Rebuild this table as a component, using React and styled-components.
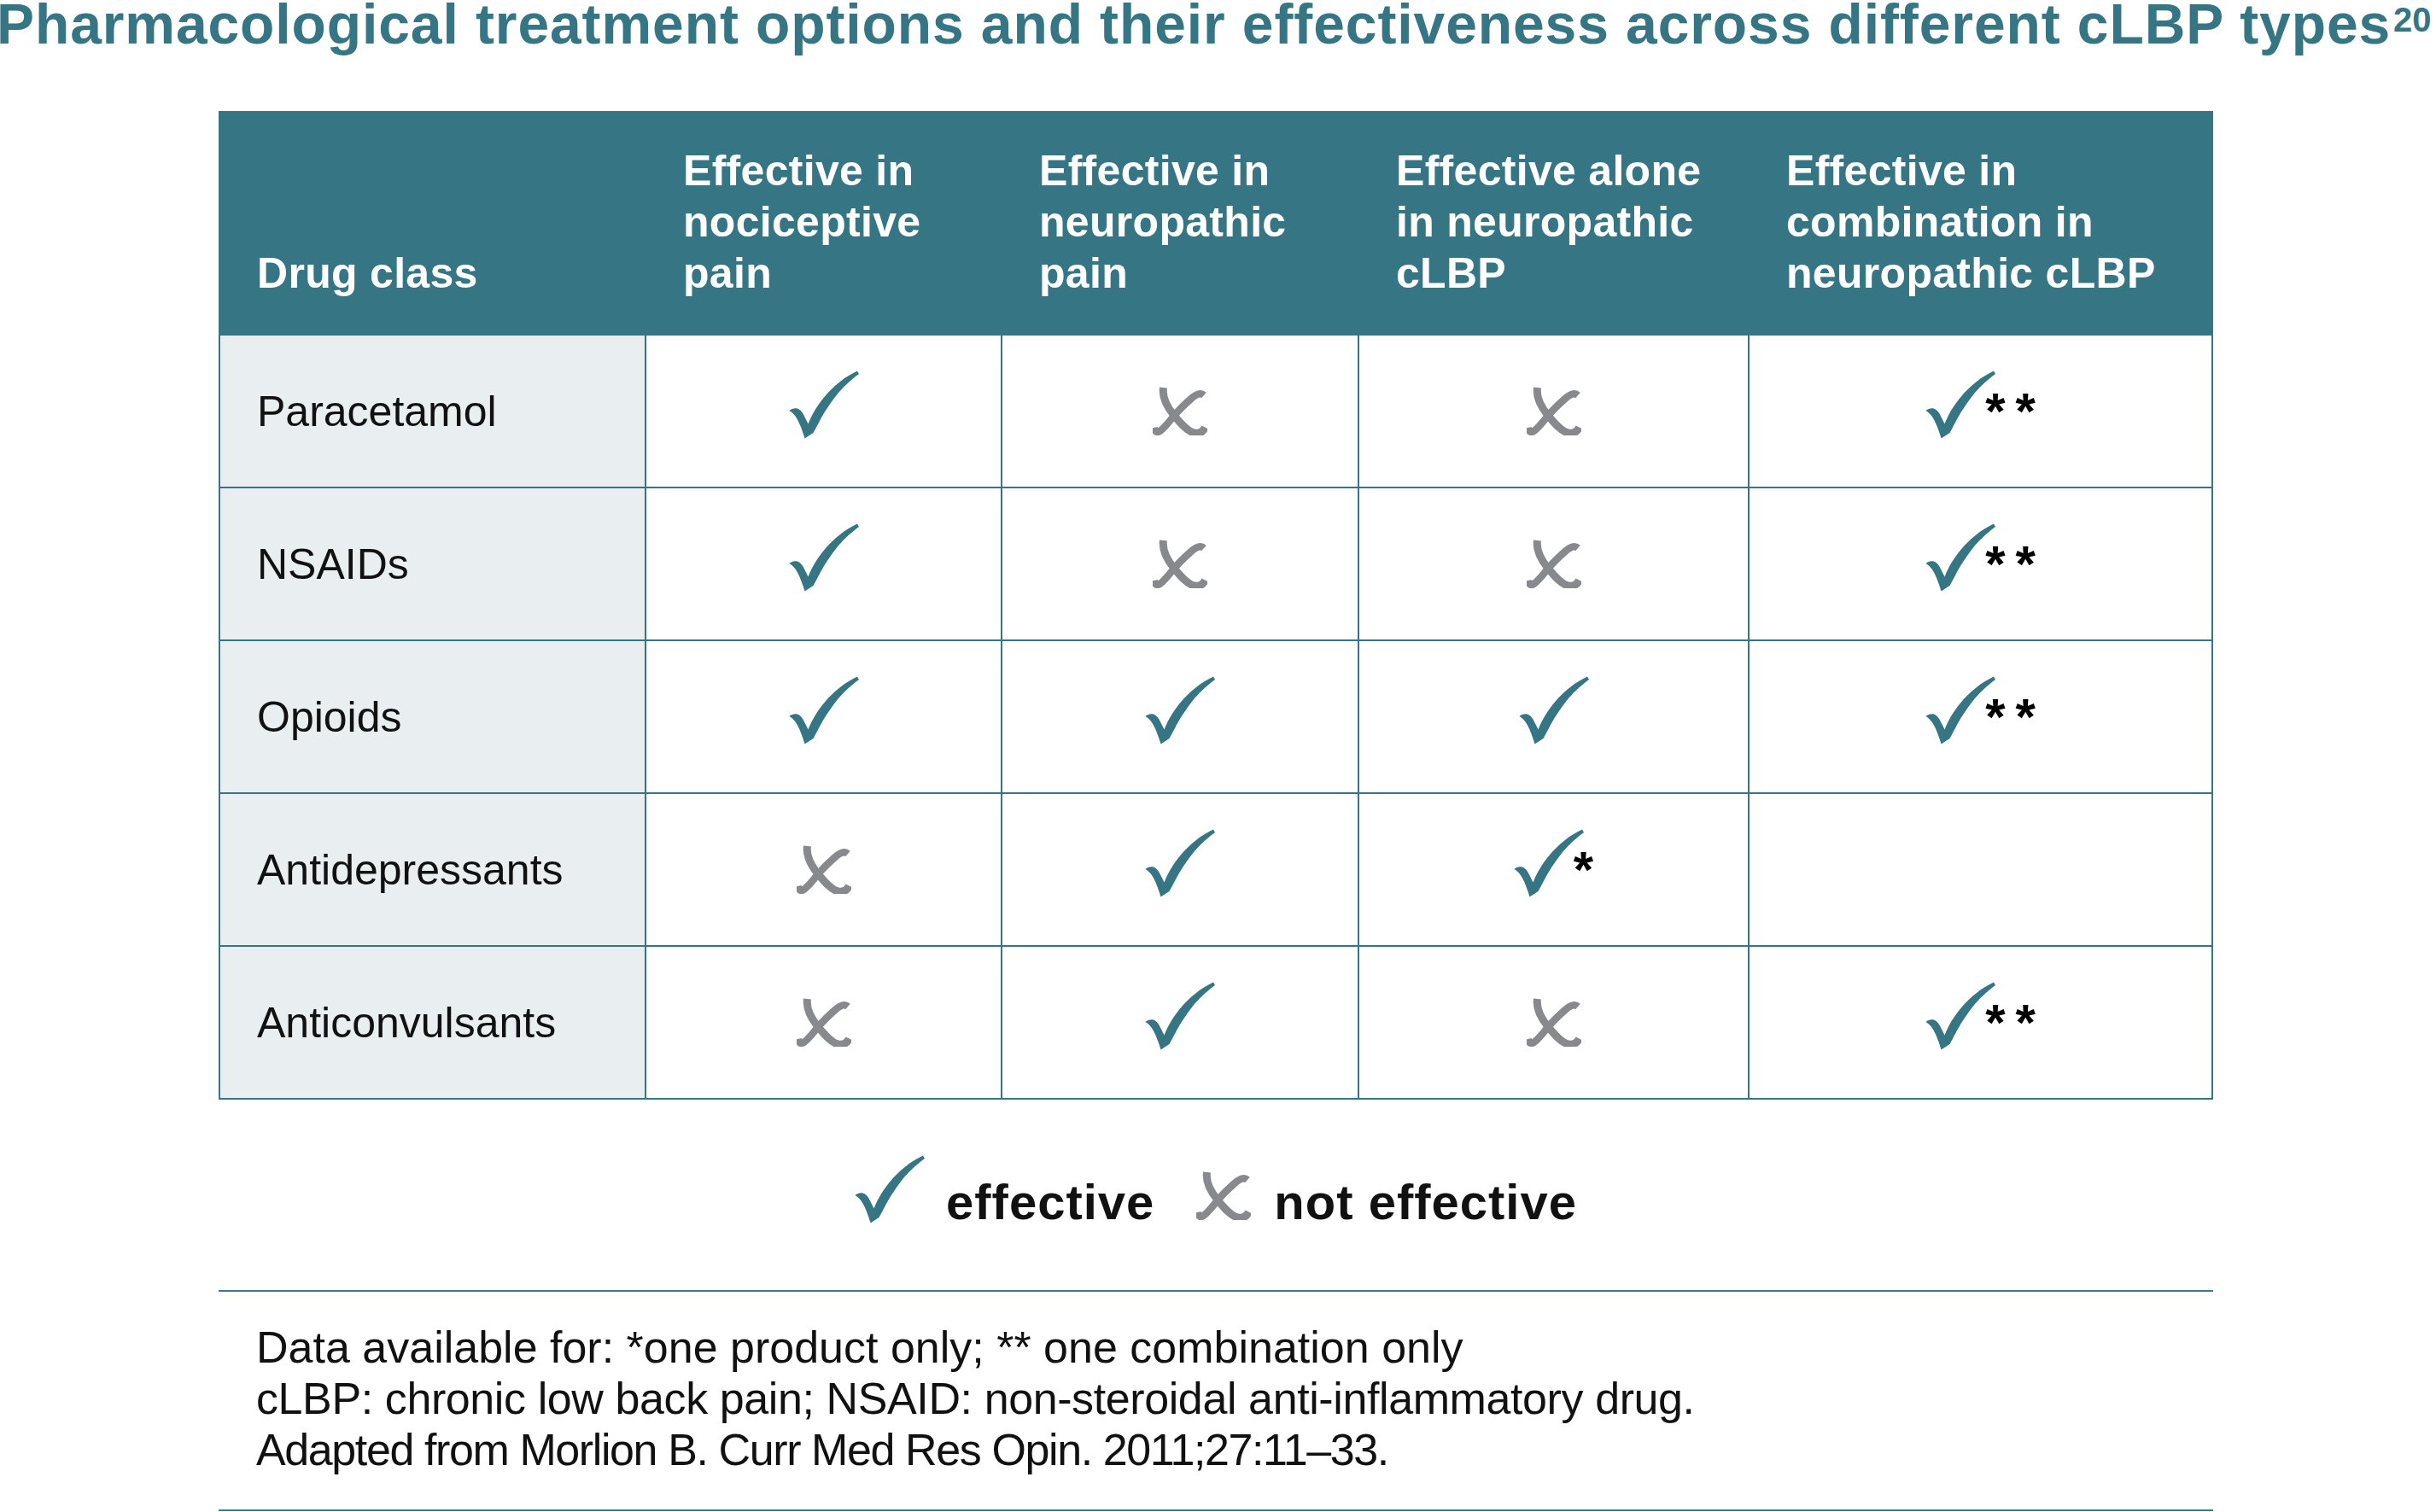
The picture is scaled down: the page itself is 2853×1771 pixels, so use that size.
import React from "react";
import styled, { createGlobalStyle } from "styled-components";

const TEAL = "#357584";
const GREY = "#88898c";
const INK = "#111111";

const GlobalStyle = createGlobalStyle`
  html, body {
    margin: 0;
    padding: 0;
    background: #ffffff;
    overflow: hidden;
  }
  body {
    font-family: "Liberation Sans", Arial, sans-serif;
    color: ${INK};
  }
  * { box-sizing: border-box; }
`;

const Page = styled.div`
  width: 2853px;
  display: flex;
  flex-direction: column;
`;

const Title = styled.h1`
  margin: 0 0 0 -4px;
  font-size: 66px;
  line-height: 56px;
  font-weight: 700;
  letter-spacing: 0.9px;
  color: ${TEAL};
  white-space: nowrap;
`;

const Sup = styled.span`
  font-size: 40px;
  line-height: 46px;
  vertical-align: top;
  letter-spacing: 0;
  margin-left: 3px;
`;

const Content = styled.div`
  margin-left: 256px;
  width: 2336px;
  display: flex;
  flex-direction: column;
`;

const Table = styled.div`
  margin-top: 74px;
  border: 2px solid ${TEAL};
  width: 2336px;
`;

const COLS = "499px 417px 418px 457px 541px";

const HeaderRow = styled.div`
  display: grid;
  grid-template-columns: ${COLS};
  height: 259px;
  background: ${TEAL};
  align-items: end;
`;

const HeaderCell = styled.div`
  padding: 0 0 41px 43px;
  color: #ffffff;
  font-size: 50px;
  line-height: 60px;
  font-weight: 700;
  letter-spacing: 0.3px;
`;

const BodyRow = styled.div`
  display: grid;
  grid-template-columns: ${COLS};
  height: 179px;
  border-top: 2px solid ${TEAL};
`;

const Cell = styled.div`
  display: flex;
  align-items: center;
  justify-content: ${(p) => (p.$label ? "flex-start" : "center")};
  padding-left: ${(p) => (p.$label ? "43px" : "0")};
  background: ${(p) => (p.$label ? "#e9eef1" : "#ffffff")};
  border-right: 2px solid ${TEAL};
  font-size: 50px;
  font-weight: 400;
  color: ${INK};
  &:last-child {
    border-right: none;
  }
`;

const MarkGroup = styled.div`
  display: flex;
  align-items: flex-start;
  margin-bottom: ${(p) => (p.$check ? "16px" : "0")};
`;

const Stars = styled.span`
  font-size: 60px;
  line-height: 60px;
  font-weight: 700;
  letter-spacing: 12px;
  margin-left: -12px;
  margin-right: -12px;
  margin-top: 18px;
  color: #000;
`;

const Svg = styled.svg`
  display: block;
  flex: none;
  margin-right: ${(p) => p.$mr || "0"};
  margin-bottom: ${(p) => p.$mb || "0"};
`;

const CheckIcon = ({ mr, mb }) => (
  <Svg $mr={mr} $mb={mb} width="82" height="80" viewBox="0 0 82 80">
    <path
      fill={TEAL}
      d="M0.5,47 C3,44.5 6.5,43.8 9,44.3 C12.5,45.2 15.5,48.5 17,51.5 L22.5,62.5 C27.5,50 34,40 41,31.5 C52,18 66,7 80,0.5 L82,4 C71,12 62,21 56,28.5 C47,40 40,51 35.5,60 L28.5,73 L18.5,79.5 C16,71 13,63 10,57.5 C7,52 4,49 0.5,47 Z"
    />
  </Svg>
);

const CrossIcon = ({ mr, mb }) => (
  <Svg $mr={mr} $mb={mb} width="64" height="57" viewBox="0 0 64 57">
    <g fill="none" stroke={GREY} strokeLinecap="butt" strokeLinejoin="round">
      <path strokeWidth="9" d="M12.5,1 C11,12 17,24 25,33.5 C32,42 40,52 48.5,54 C55,55.5 59,52.5 61.5,47.5" />
      <path strokeWidth="8.5" d="M60,10 C56,6.5 50,9.5 45,14 C37,21 30,28 25,34 C19,41 14,48 9,51.5 C5,54.5 2.5,52.5 1.5,48" />
    </g>
  </Svg>
);

const Mark = ({ value }) => {
  if (!value) return null;
  if (value === "x") {
    return (
      <MarkGroup>
        <CrossIcon />
      </MarkGroup>
    );
  }
  const stars = value.slice(1);
  return (
    <MarkGroup $check>
      <CheckIcon />
      {stars && <Stars>{stars}</Stars>}
    </MarkGroup>
  );
};

const Legend = styled.div`
  margin-top: 65px;
  height: 80px;
  display: flex;
  justify-content: center;
  align-items: flex-end;
`;

const LegendText = styled.span`
  font-size: 58px;
  line-height: 58px;
  font-weight: 700;
  letter-spacing: 1px;
  color: ${INK};
  margin-bottom: -4px;
  margin-right: ${(p) => p.$mr || "0"};
`;

const Footnote = styled.div`
  margin-top: 78px;
  border-top: 2px solid #3d7b89;
  border-bottom: 2px solid #3d7b89;
  padding: 35px 0 40px 44px;
  font-size: 52px;
  line-height: 60px;
  color: ${INK};
`;

const FootLine = styled.div`
  white-space: nowrap;
  letter-spacing: ${(p) => p.$ls || "0"};
`;

const headers = [
  ["Drug class"],
  ["Effective in", "nociceptive", "pain"],
  ["Effective in", "neuropathic", "pain"],
  ["Effective alone", "in neuropathic", "cLBP"],
  ["Effective in", "combination in", "neuropathic cLBP"],
];

const rows = [
  { name: "Paracetamol", marks: ["v", "x", "x", "v**"] },
  { name: "NSAIDs", marks: ["v", "x", "x", "v**"] },
  { name: "Opioids", marks: ["v", "v", "v", "v**"] },
  { name: "Antidepressants", marks: ["x", "v", "v*", ""] },
  { name: "Anticonvulsants", marks: ["x", "v", "x", "v**"] },
];

export default function App() {
  return (
    <>
      <GlobalStyle />
      <Page>
        <Title>
          Pharmacological treatment options and their effectiveness across different cLBP types
          <Sup>20</Sup>
        </Title>
        <Content>
          <Table>
            <HeaderRow>
              {headers.map((lines, i) => (
                <HeaderCell key={i}>
                  {lines.map((l, j) => (
                    <div key={j}>{l}</div>
                  ))}
                </HeaderCell>
              ))}
            </HeaderRow>
            {rows.map((r) => (
              <BodyRow key={r.name}>
                <Cell $label>{r.name}</Cell>
                {r.marks.map((m, i) => (
                  <Cell key={i}>
                    <Mark value={m} />
                  </Cell>
                ))}
              </BodyRow>
            ))}
          </Table>
          <Legend>
            <CheckIcon mr="25px" />
            <LegendText $mr="49px">effective</LegendText>
            <CrossIcon mr="27px" mb="4px" />
            <LegendText>not effective</LegendText>
          </Legend>
          <Footnote>
            <FootLine>Data available for: *one product only; ** one combination only</FootLine>
            <FootLine $ls="-0.4px">cLBP: chronic low back pain; NSAID: non-steroidal anti-inflammatory drug.</FootLine>
            <FootLine $ls="-1.4px">Adapted from Morlion B. Curr Med Res Opin. 2011;27:11–33.</FootLine>
          </Footnote>
        </Content>
      </Page>
    </>
  );
}
